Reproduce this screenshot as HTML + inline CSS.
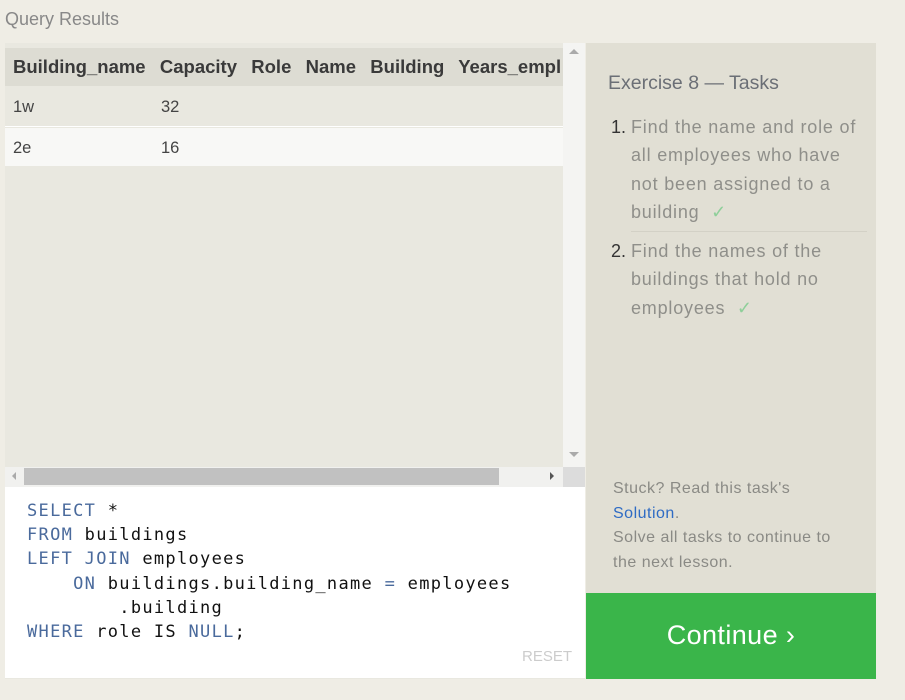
<!DOCTYPE html>
<html><head><meta charset="utf-8"><style>
*{margin:0;padding:0;box-sizing:border-box}
body{width:905px;height:700px;background:#efede5;font-family:"Liberation Sans",sans-serif;position:relative;overflow:hidden}
.a{position:absolute}
.t{white-space:nowrap}
.code{font-family:"DejaVu Sans Mono","Liberation Mono",monospace;font-size:17px;letter-spacing:1.3px;line-height:24.2px;color:#111}
.k{color:#4a6a9c}
.tk{font-size:18px;line-height:28.3px;color:#8f8f8a;letter-spacing:0.8px}
</style></head><body>
<div class="a t" style="left:5px;top:9px;font-size:18px;color:#888">Query Results</div>
<div class="a" style="left:5px;top:43px;width:580px;height:636px;background:#e9e8e0"></div>
<div class="a" style="left:5px;top:48px;width:558px;height:38px;background:#dddcd3"></div>
<div class="a t" style="left:13px;top:56px;font-size:18.5px;font-weight:bold;color:#3a3a3a;word-spacing:2px">Building_name&nbsp; Capacity&nbsp; Role&nbsp; Name&nbsp; Building&nbsp; Years_empl</div>
<div class="a" style="left:5px;top:86px;width:558px;height:41px;background:#e9e8e0;border-bottom:1px solid #fff"></div>
<div class="a t" style="left:13px;top:98px;font-size:16.5px;color:#444">1w</div>
<div class="a t" style="left:161px;top:98px;font-size:16.5px;color:#444">32</div>
<div class="a" style="left:5px;top:128px;width:558px;height:38px;background:#f8f8f6"></div>
<div class="a t" style="left:13px;top:139px;font-size:16.5px;color:#444">2e</div>
<div class="a t" style="left:161px;top:139px;font-size:16.5px;color:#444">16</div>
<div class="a" style="left:563px;top:43px;width:22px;height:424px;background:#f4f4f2"></div>
<div class="a" style="left:569px;top:49px;width:0;height:0;border-left:5px solid transparent;border-right:5px solid transparent;border-bottom:5px solid #aaa"></div>
<div class="a" style="left:569px;top:452px;width:0;height:0;border-left:5px solid transparent;border-right:5px solid transparent;border-top:5px solid #aaa"></div>
<div class="a" style="left:5px;top:467px;width:558px;height:20px;background:#f1f1ef"></div>
<div class="a" style="left:563px;top:467px;width:22px;height:20px;background:#dcdcdc"></div>
<div class="a" style="left:24px;top:468px;width:475px;height:17px;background:#c1c1c1"></div>
<div class="a" style="left:12px;top:472px;border-top:4px solid transparent;border-bottom:4px solid transparent;border-right:4px solid #aaa"></div>
<div class="a" style="left:550px;top:472px;border-top:4px solid transparent;border-bottom:4px solid transparent;border-left:4px solid #555"></div>
<div class="a" style="left:5px;top:487px;width:580px;height:191px;background:#fff"></div>
<div class="a code" style="left:27px;top:499px;white-space:pre"><span class="k">SELECT</span> *
<span class="k">FROM</span> buildings
<span class="k">LEFT JOIN</span> employees
    <span class="k">ON</span> buildings.building_name <span class="k">=</span> employees
        .building
<span class="k">WHERE</span> role IS <span class="k">NULL</span>;</div>
<div class="a t" style="left:522px;top:648px;font-size:15px;color:#ccc">RESET</div>
<div class="a" style="left:586px;top:43px;width:290px;height:550px;background:#e1dfd4"></div>
<div class="a t" style="left:608px;top:72px;font-size:19.5px;color:#6b6f76">Exercise 8 — Tasks</div>
<div class="a t" style="left:611px;top:113px;font-size:18px;line-height:28.3px;color:#333">1.</div>
<div class="a tk t" style="left:631px;top:113px">Find the name and role of<br>all employees who have<br>not been assigned to a<br>building &nbsp;<span style="color:#8fcf9a">✓</span></div>
<div class="a" style="left:631px;top:231px;width:236px;height:1px;background:#d3d1c6"></div>
<div class="a t" style="left:611px;top:237px;font-size:18px;line-height:28.3px;color:#333">2.</div>
<div class="a tk t" style="left:631px;top:237px">Find the names of the<br>buildings that hold no<br>employees &nbsp;<span style="color:#8fcf9a">✓</span></div>
<div class="a t" style="left:613px;top:477px;font-size:16px;line-height:24.5px;color:#8a8a85;letter-spacing:0.5px">Stuck? Read this task's<br><span style="color:#2e6bc4">Solution</span>.<br>Solve all tasks to continue to<br>the next lesson.</div>
<div class="a" style="left:586px;top:593px;width:290px;height:86px;background:#3ab54a"></div>
<div class="a t" style="left:586px;top:620px;width:290px;text-align:center;font-size:27px;color:#fff;letter-spacing:0.4px">Continue ›</div>
</body></html>
